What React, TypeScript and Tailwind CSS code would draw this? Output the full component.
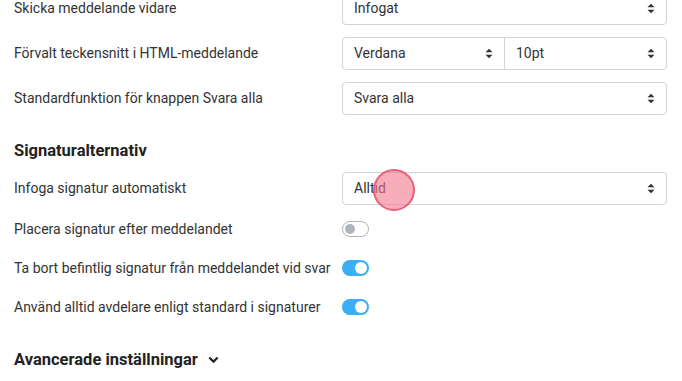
import React from 'react';

function SortIcon() {
    return (
        <svg width="8" height="11" viewBox="0 0 8 11" className="shrink-0">
            <path d="M0.5 4.2 L4 0.8 L7.5 4.2 Z" fill="#333" />
            <path d="M0.5 6.8 L4 10.2 L7.5 6.8 Z" fill="#333" />
        </svg>
    );
}

function Select({ value, className = '' }: { value: string; className?: string }) {
    return (
        <div
            className={`flex h-[33px] items-center justify-between border border-[#ced4da] bg-white pl-[11px] pr-[11px] text-[14px] text-[#333] ${className}`}
        >
            <span>{value}</span>
            <SortIcon />
        </div>
    );
}

function Toggle({ on }: { on: boolean }) {
    if (on) {
        return (
            <div className="flex h-[16px] w-[27px] items-center justify-end rounded-full bg-[#3aaff5] px-[2px]">
                <div className="h-[12px] w-[12px] rounded-full bg-white" />
            </div>
        );
    }
    return (
        <div className="flex h-[16px] w-[27px] items-center rounded-full border border-[#aeb5bc] bg-white px-[2px]">
            <div className="h-[10px] w-[10px] rounded-full bg-[#aeb5bc]" />
        </div>
    );
}

function Row({ label, children }: { label: string; children: React.ReactNode }) {
    return (
        <div className="grid grid-cols-[328px_1fr] items-center">
            <span className="text-[14px] text-[#333]">{label}</span>
            <div>{children}</div>
        </div>
    );
}

function SwitchRow({ label, on }: { label: string; on: boolean }) {
    return (
        <div className="grid h-[24px] grid-cols-[328px_1fr] items-center">
            <span className="text-[14px] text-[#333]">{label}</span>
            <Toggle on={on} />
        </div>
    );
}

export default function App() {
    return (
        <div
            className="relative h-[381px] w-[682px] overflow-hidden bg-white"
            style={{ fontFamily: 'Roboto, "Liberation Sans", sans-serif' }}
        >
            <div className="-mt-[8px] flex flex-col pl-[14px] pr-[15px]">
                <div className="flex flex-col gap-[12px]">
                    <Row label="Skicka meddelande vidare">
                        <Select value="Infogat" className="rounded" />
                    </Row>
                    <Row label="Förvalt teckensnitt i HTML-meddelande">
                        <div className="flex">
                            <Select value="Verdana" className="w-[163px] rounded-l" />
                            <Select value="10pt" className="-ml-px flex-1 rounded-r" />
                        </div>
                    </Row>
                    <Row label="Standardfunktion för knappen Svara alla">
                        <Select value="Svara alla" className="rounded" />
                    </Row>
                </div>

                <h2 className="mt-[26px] text-[16.5px] font-bold leading-[20px] text-[#222]">Signaturalternativ</h2>

                <div className="mt-[11px]">
                    <Row label="Infoga signatur automatiskt">
                        <Select value="Alltid" className="rounded" />
                    </Row>
                </div>

                <div className="mt-[12px] flex flex-col gap-[15px]">
                    <SwitchRow label="Placera signatur efter meddelandet" on={false} />
                    <SwitchRow label="Ta bort befintlig signatur från meddelandet vid svar" on />
                    <SwitchRow label="Använd alltid avdelare enligt standard i signaturer" on />
                </div>

                <div className="mt-[31px] flex items-center gap-[10px]">
                    <h2 className="text-[16.5px] font-bold leading-[20px] text-[#222]">Avancerade inställningar</h2>
                    <svg width="11" height="8" viewBox="0 0 11 8">
                        <path d="M1.3 1.5 L5.5 5.6 L9.7 1.5" fill="none" stroke="#222" strokeWidth="2.2" />
                    </svg>
                </div>
            </div>

            {/* click indicator */}
            <div className="absolute left-[373px] top-[169px] h-[42px] w-[42px] rounded-full border-2 border-[#e8607a] bg-[#f4778c]/60" />
        </div>
    );
}
